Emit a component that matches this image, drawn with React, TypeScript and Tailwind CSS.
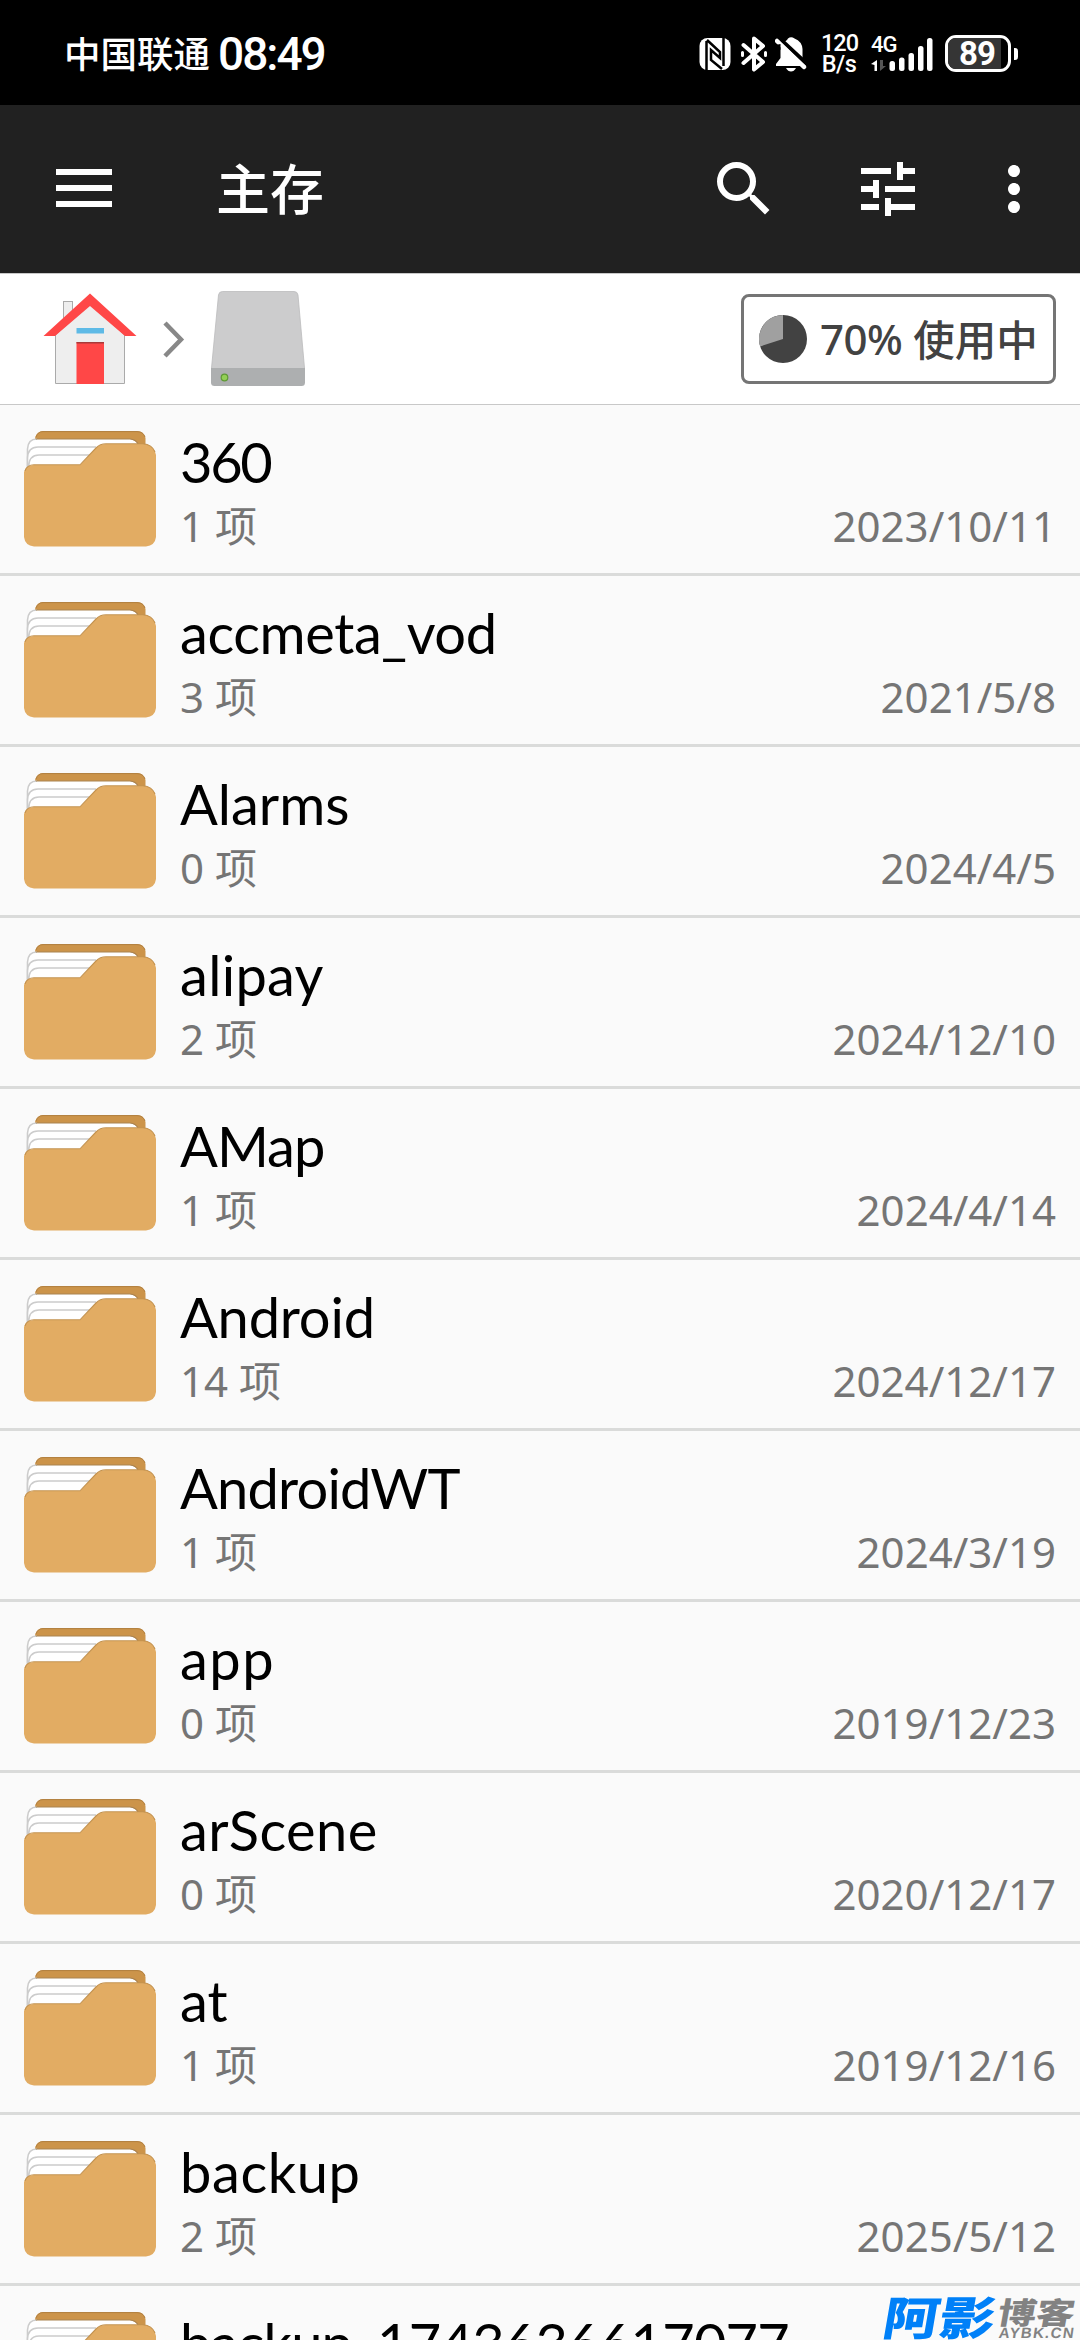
import React from 'react';
import { MdSearch, MdTune, MdMoreVert } from 'react-icons/md';

const folders = [
  { name: '360', count: 1, date: '2023/10/11', tracking: 'tracking-[-2.3px]' },
  { name: 'accmeta_vod', count: 3, date: '2021/5/8', tracking: 'tracking-[-0.4px]' },
  { name: 'Alarms', count: 0, date: '2024/4/5', tracking: 'tracking-normal' },
  { name: 'alipay', count: 2, date: '2024/12/10', tracking: 'tracking-[0.3px]' },
  { name: 'AMap', count: 1, date: '2024/4/14', tracking: 'tracking-[-1px]' },
  { name: 'Android', count: 14, date: '2024/12/17', tracking: 'tracking-[-0.2px]' },
  { name: 'AndroidWT', count: 1, date: '2024/3/19', tracking: 'tracking-[-0.8px]' },
  { name: 'app', count: 0, date: '2019/12/23', tracking: 'tracking-[1.5px]' },
  { name: 'arScene', count: 0, date: '2020/12/17', tracking: 'tracking-[0.4px]' },
  { name: 'at', count: 1, date: '2019/12/16', tracking: 'tracking-normal' },
  { name: 'backup', count: 2, date: '2025/5/12', tracking: 'tracking-[0.6px]' },
  { name: 'backup_1743636617077', count: 0, date: '2025/4/3', tracking: 'tracking-[-0.8px]' }
];

function StatusBar() {
  return (
    <div className="flex h-[105px] shrink-0 items-center bg-black pl-[64px] text-white">
      <span className="text-[36.5px] leading-[54px] font-medium font-['Noto_Sans_CJK_SC',sans-serif]">中国联通</span>
      <span className="ml-[8px] pt-[2px] text-[46px] leading-[54px] font-medium tracking-[-2px] font-['Roboto',sans-serif]">08:49</span>

      <div className="ml-auto flex h-[40px] items-center pt-[2px] pr-[62px]">
        <svg className="h-[34px] w-[32px]" viewBox="0 0 32 34">
          <rect x="0.5" y="1" width="31" height="32" rx="8" fill="#fff" />
          <path d="M7.500 4V33M8 3L21 15V21L12 13V23L23 32M24.500 1V29" fill="none" stroke="#000" strokeWidth="2.500" />
        </svg>
        <svg className="ml-[10px] h-[36px] w-[26px]" viewBox="0 0 26 36" fill="none" stroke="#fff" strokeWidth="4" strokeLinejoin="round" strokeLinecap="round">
          <path d="M2.500 9L22 26L13 33.500V2.500L22 10L2.500 27" />
          <path d="M1.500 16.500v3M24.500 16.500v3" strokeWidth="3" />
        </svg>
        <svg className="ml-[8px] h-[36px] w-[32px]" viewBox="0 0 32 36">
          <path d="M10 5.500Q12.500 4 13 2.500Q16 0 19.500 2.500Q27 5.500 27.500 13V22L31 28V30H1V28L5.500 22V12Q6 8 10 5.500Z" fill="#fff" />
          <path d="M11 32H21Q19 35.500 16 35.500Q13 35.500 11 32Z" fill="#fff" />
          <path d="M4 2L33 29" stroke="#000" strokeWidth="4" />
          <path d="M2 5L29 31" stroke="#fff" strokeWidth="4.500" strokeLinecap="round" />
          <path d="M0 9L5.500 14V8Z" fill="#000" />
        </svg>
        <div className="ml-[14px] flex w-[36px] flex-col text-center text-[23.5px] leading-[21px] font-medium font-['Roboto',sans-serif]">
          <span className="tracking-[-1px]">120</span>
          <span className="tracking-[-0.5px]">B/s</span>
        </div>
        <div className="relative ml-[14px] h-[36px] w-[62px]">
          <span className="absolute -top-[1px] left-0 text-[22px] leading-[20px] font-medium tracking-[-1px] font-['Roboto',sans-serif]">4G</span>
          <svg className="h-[36px] w-[62px]" viewBox="0 0 62 36">
            <path d="M0 28L6 24V35H3.500V29Z" fill="#fff" />
            <path d="M9 24V35L15 30H12V24Z" fill="#555" />
            <g fill="#fff">
              <rect x="18.500" y="25" width="5.500" height="10" rx="2.500" />
              <rect x="28" y="21.500" width="5.500" height="13.500" rx="2.500" />
              <rect x="37.500" y="17" width="5.500" height="18" rx="2.500" />
              <rect x="47" y="10" width="5.500" height="25" rx="2.500" />
              <rect x="56" y="2" width="5.500" height="33" rx="2.500" />
            </g>
          </svg>
        </div>
        <div className="relative ml-[12px] flex h-[37px] w-[66px] items-center justify-center rounded-[11px] border-[3px] border-white bg-black bg-clip-padding">
          <div className="absolute inset-y-0 left-0 w-[53px] rounded-l-[8px] bg-[#353535]" />
          <span className="relative -left-[1px] text-[33px] leading-[31px] font-bold tracking-[-1px] font-['Roboto',sans-serif]">89</span>
        </div>
        <div className="ml-[3px] h-[12px] w-[4px] rounded-r-[3px] bg-white" />
      </div>
    </div>
  );
}

function Toolbar() {
  return (
    <div className="flex h-[168px] shrink-0 items-center bg-[#212121] pr-[30px] pl-[48px] text-white">
      <svg className="size-[72px]" viewBox="0 0 72 72" fill="#fff">
        <rect x="8" y="16" width="56" height="6" />
        <rect x="8" y="32" width="56" height="6" />
        <rect x="8" y="48" width="56" height="6" />
      </svg>
      <h1 className="ml-[96px] pb-[4px] text-[54px] leading-[72px] font-medium font-['Noto_Sans_CJK_SC',sans-serif]">主存</h1>
      <MdSearch className="ml-auto size-[72px]" />
      <MdTune className="ml-[72px] size-[72px]" />
      <MdMoreVert className="ml-[54px] size-[72px]" />
    </div>
  );
}

function HomeIcon() {
  return (
    <svg className="size-[96px]" viewBox="42 291 96 96">
      <rect x="63.500" y="301.500" width="9" height="24" fill="#eee" stroke="#aaa" />
      <path d="M55.500 335L90 303L124.500 335V383.500H55.500Z" fill="#eee" stroke="#aaa" />
      <path d="M90 293.500L136.500 336H125L90 306L55 336H43.500Z" fill="#ff4747" />
      <rect x="76.500" y="328" width="27.500" height="5.500" fill="#5ebae6" />
      <rect x="76.500" y="342" width="27.500" height="42" fill="#ff4747" />
      <rect x="76.500" y="342" width="27.500" height="1.500" fill="#a83a3a" />
    </svg>
  );
}

function DriveIcon() {
  return (
    <svg className="size-[96px]" viewBox="210 291 96 96">
      <path d="M222.500 291.500H294Q297.500 291.500 298 295L304.500 368V372H211.500V368L218.500 295Q219 291.500 222.500 291.500Z" fill="#cccccd" stroke="#bbbbbc" strokeWidth="0.800" />
      <path d="M211 368H305V382.500Q305 386 301.500 386H214.500Q211 386 211 382.500Z" fill="#adafb0" />
      <circle cx="224.500" cy="377.500" r="3.300" fill="#93cf56" stroke="#5f9a35" strokeWidth="1.200" />
    </svg>
  );
}

function PathBar() {
  return (
    <div className="flex h-[132px] shrink-0 items-center border-t border-b border-t-[#c8c8c8] border-b-[#c8c8c8] bg-white pr-[24px] pl-[42px]">
      <HomeIcon />
      <svg className="ml-[24px] h-[40px] w-[24px]" viewBox="0 0 24 40">
        <path d="M3 4L19 20.500L3 37" fill="none" stroke="#888" strokeWidth="4.500" />
      </svg>
      <div className="ml-[24px]">
        <DriveIcon />
      </div>
      <div className="ml-auto flex h-[90px] w-[315px] items-center rounded-[8px] border-[3px] border-[#757575] pl-[15px] text-[#424242]">
        <svg className="size-[48px]" viewBox="0 0 48 48">
          <circle cx="24" cy="24" r="24" fill="#424242" />
          <path d="M24 24V0A24 24 0 0 0 1.170 31.420Z" fill="#a0a0a0" />
        </svg>
        <span className="ml-[13px] text-[42px] leading-[56px] font-medium tracking-[-0.5px] font-['Noto_Sans','Noto_Sans_CJK_SC',sans-serif]">70%</span>
        <span className="ml-[11px] pb-[2px] text-[41.5px] leading-[56px] font-medium font-['Noto_Sans_CJK_SC',sans-serif]">使用中</span>
      </div>
    </div>
  );
}

function FolderIcon() {
  return (
    <svg className="mt-[26px] h-[116px] w-[132px] shrink-0" viewBox="0 0 132 116">
      <path d="M11 30V7Q13 0 19 0H113Q120 0 121.500 7V30Z" fill="#cc944a" />
      <path d="M12 6Q14 0.600 19 0.600H113Q119 0.600 121 6" fill="none" stroke="#b28040" strokeWidth="1" />
      <g fill="#fff" stroke="#ccc" strokeWidth="1.600">
        <path d="M3.500 45V17Q4 8 13 8H106Q113 9 115 16V45Z" stroke="none" />
        <path d="M3.500 45V18Q4 8 13 8" />
        <path d="M3.500 45V27Q4 16 14 16H72" />
        <path d="M4.500 45V36Q5 24 15 24H66" />
      </g>
      <path d="M12 8H106Q112 8.500 114 13" fill="none" stroke="#aa8350" strokeWidth="1.200" />
      <path d="M0 41Q2 34 10 34H56L72 17Q76 13 82 13H120Q130 14 132 24V106Q131 114.500 122 115.500H10Q1 114.500 0 106Z" fill="#e2ac63" />
      <path d="M1 40Q3 33.800 10 33.800H56L72 17Q76 12.800 82 12.800H119Q128 13.500 131 21" fill="none" stroke="#c3924f" strokeWidth="1.100" />
    </svg>
  );
}

function Watermark() {
  return (
    <div className="absolute right-0 bottom-0 flex h-[48px] w-[196px] font-black font-['Noto_Sans_CJK_SC',sans-serif]">
      <span className="w-[115px] origin-left -skew-x-8 scale-x-[1.22] text-[46px] leading-[47px] whitespace-nowrap text-[#0080f8]">阿影</span>
      <div className="flex flex-col whitespace-nowrap text-[#828282]">
        <span className="h-[33px] origin-left -skew-x-8 scale-x-[1.28] text-[30px] leading-[38px]">博客</span>
        <span className="origin-left -skew-x-8 text-[15px] leading-[15px] font-bold tracking-[1.3px] font-['Liberation_Sans',sans-serif]">AYBK.CN</span>
      </div>
    </div>
  );
}

export default function App() {
  return (
    <div className="relative flex h-[2340px] w-[1080px] flex-col overflow-hidden bg-[#fafafa]">
      <StatusBar />
      <Toolbar />
      <PathBar />
      {folders.map((folder) => (
        <div key={folder.name} className="flex h-[171px] shrink-0 border-b-[3px] border-[#dadbda] px-6">
          <FolderIcon />
          <div className="ml-6 flex flex-1 flex-col pt-[23px]">
            <p className={`text-[56px] leading-[67px] text-black font-['Lato',sans-serif] ${folder.tracking}`}>{folder.name}</p>
            <div className="mt-1 flex justify-between text-[42px] leading-[54px] text-[#757575] font-['Noto_Sans','Noto_Sans_CJK_SC',sans-serif]">
              <span>{folder.count} 项</span>
              <span>{folder.date}</span>
            </div>
          </div>
        </div>
      ))}
      <Watermark />
    </div>
  );
}
